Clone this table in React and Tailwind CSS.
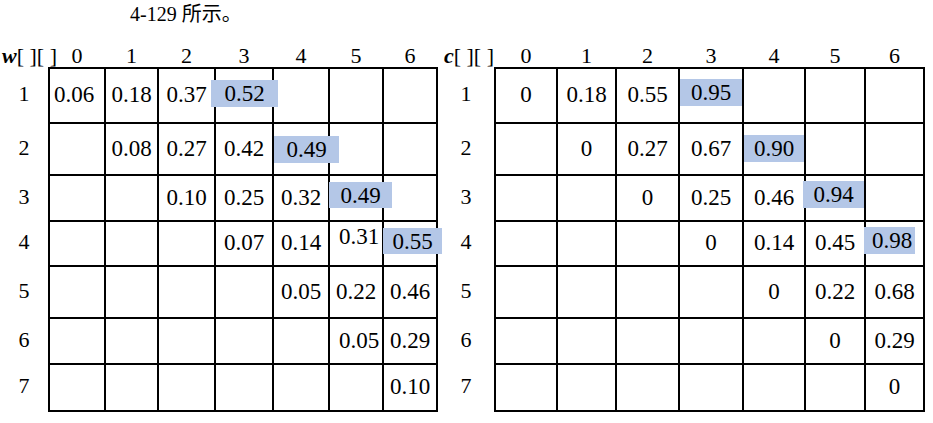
const rowH = ['h-[53px]', 'h-[50px]', 'h-[44px]', 'h-[43px]', 'h-[50px]', 'h-[44px]', 'h-[45px]']
const rowsTpl = 'grid-rows-[53px_50px_44px_43px_50px_44px_45px]'

// highlighted cells: the blue box spills over the grid lines, like in the book
const hl = (v, pos) => ({ v, hl: pos })

const wData = [
  [{ v: '0.06', cls: 'pr-[6px]' }, '0.18', '0.37', hl('0.52', 'left-[-5px] top-[11px] w-[67px] h-[27px]'), '', '', ''],
  ['', '0.08', '0.27', '0.42', hl('0.49', 'left-[0px] top-[12px] w-[65px] h-[27px]'), '', ''],
  ['', '', '0.10', '0.25', '0.32', hl('0.49', 'left-[-1px] top-[6px] w-[63px] h-[26px]'), ''],
  ['', '', '', '0.07', '0.14', { v: '0.31', cls: 'pb-[14px] pl-[6px]' }, hl('0.55', 'left-[-1px] top-[6px] w-[59px] h-[26px]')],
  ['', '', '', '', '0.05', '0.22', '0.46'],
  ['', '', '', '', '', { v: '0.05', cls: 'pl-[6px]' }, '0.29'],
  ['', '', '', '', '', '', '0.10'],
]

const cData = [
  ['0', '0.18', '0.55', hl('0.95', 'left-[0px] top-[10px] w-[62px] h-[27px]'), '', '', ''],
  ['', '0', '0.27', '0.67', hl('0.90', 'left-[0px] top-[11px] w-[60px] h-[27px]'), '', ''],
  ['', '', '0', '0.25', '0.46', hl('0.94', 'left-[-3px] top-[5px] w-[61px] h-[27px]'), ''],
  ['', '', '', '0', '0.14', '0.45', hl('0.98', 'left-[-2px] top-[5px] w-[51px] h-[27px] pl-[5px]')],
  ['', '', '', '', '0', '0.22', '0.68'],
  ['', '', '', '', '', '0', '0.29'],
  ['', '', '', '', '', '', '0'],
]

function Cell({ cell }) {
  const c = typeof cell === 'string' ? { v: cell } : cell
  if (c.hl) {
    return (
      <div className="relative bg-white">
        <div className={`absolute z-10 flex items-center justify-center bg-[#b4c7e7] leading-none ${c.hl}`}>
          {c.v}
        </div>
      </div>
    )
  }
  return (
    <div className={`flex items-center justify-center bg-white leading-none pb-[2px] ${c.cls || ''}`}>
      {c.v}
    </div>
  )
}

function Table({ label, labelW, labelCls, colsTpl, data }) {
  return (
    <div className="flex flex-col">
      {/* column indexes */}
      <div className="flex h-[27px] items-end">
        <div className={`flex whitespace-nowrap text-[22px] leading-none ${labelW} ${labelCls}`}>{label}</div>
        <div className={`grid gap-[2px] px-[2px] ${colsTpl}`}>
          {[0, 1, 2, 3, 4, 5, 6].map(i => (
            <div key={i} className="text-center text-[22px] leading-none">{i}</div>
          ))}
        </div>
      </div>

      <div className="flex">
        {/* row indexes */}
        <div className={`flex flex-col gap-[2px] pt-[2px] ${labelW}`}>
          {rowH.map((h, i) => (
            <div key={i} className={`flex items-center justify-center pb-[3px] text-[22px] leading-none ${h}`}>{i + 1}</div>
          ))}
        </div>

        <div className={`grid gap-[2px] bg-black p-[2px] text-[23px] ${colsTpl} ${rowsTpl}`}>
          {data.map((row, r) => row.map((cell, k) => <Cell key={`${r}-${k}`} cell={cell} />))}
        </div>
      </div>
    </div>
  )
}

export default function App() {
  return (
    <div className="h-[423px] w-[933px] overflow-hidden bg-white text-black font-[family-name:Liberation_Serif,Noto_Sans_CJK_SC,serif]">
      <div className="h-[40px] pl-[130px] pt-[4px] text-[20px] leading-none">4-129 所示。</div>

      <div className="flex">
        <Table
          label={<span className="pl-[2px]"><i className="font-bold">w</i>[ ][ ]</span>}
          labelW="w-[48px]"
          labelCls="justify-start"
          colsTpl="grid-cols-[54px_51px_55px_56px_54px_52px_52px]"
          data={wData}
        />
        <Table
          label={<span><i className="font-bold">c</i>[ ][ ]</span>}
          labelW="w-[56px]"
          labelCls="justify-end"
          colsTpl="grid-cols-[60px_57px_61px_62px_60px_58px_57px]"
          data={cData}
        />
      </div>
    </div>
  )
}
